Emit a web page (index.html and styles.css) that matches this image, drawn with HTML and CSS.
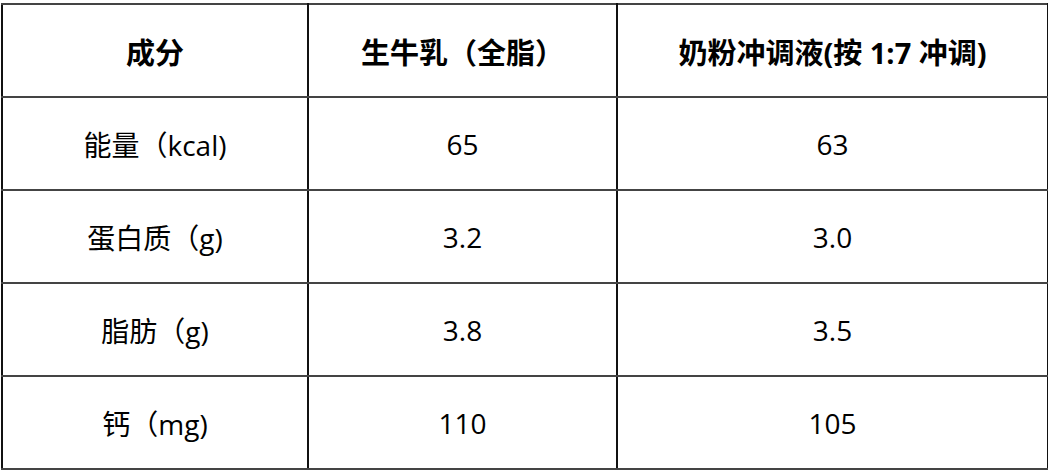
FILE: index.html
```html
<!DOCTYPE html>
<html lang="zh-CN">
<head>
<meta charset="utf-8">
<link rel="stylesheet" href="styles.css">
</head>
<body>
<table class="nutrition">
  <colgroup>
    <col class="c1"><col class="c2"><col class="c3">
  </colgroup>
  <thead>
    <tr><th>成分</th><th>生牛乳（全脂）</th><th>奶粉冲调液(按 1:7 冲调)</th></tr>
  </thead>
  <tbody>
    <tr><td>能量（kcal)</td><td>65</td><td>63</td></tr>
    <tr><td>蛋白质（g)</td><td>3.2</td><td>3.0</td></tr>
    <tr><td>脂肪（g)</td><td>3.8</td><td>3.5</td></tr>
    <tr><td>钙（mg)</td><td>110</td><td>105</td></tr>
  </tbody>
</table>
</body>
</html>
```
FILE: styles.css
```css
html, body {
  margin: 0;
  padding: 0;
  background: #fff;
}
body {
  padding: 3px 0 0 1px;
  font-family: "Open Sans", "Noto Sans CJK SC", sans-serif;
  color: #000;
}
.nutrition {
  border-collapse: collapse;
  width: 1046px;
  height: 466px;
  table-layout: fixed;
  border: 2px solid #000;
}
.c1 { width: 306px; }
.c2 { width: 309px; }
.c3 { width: 431px; }
.nutrition th,
.nutrition td {
  text-align: center;
  vertical-align: middle;
  padding: 0;
  border-left: 2px solid #111;
  border-right: 2px solid #111;
  border-top: 2px solid #444;
  border-bottom: 2px solid #444;
}
.nutrition th {
  font-size: 29px;
  font-weight: 700;
}
.nutrition td {
  font-size: 28px;
  font-weight: 400;
}
.nutrition tr {
  height: 93px;
}
```
